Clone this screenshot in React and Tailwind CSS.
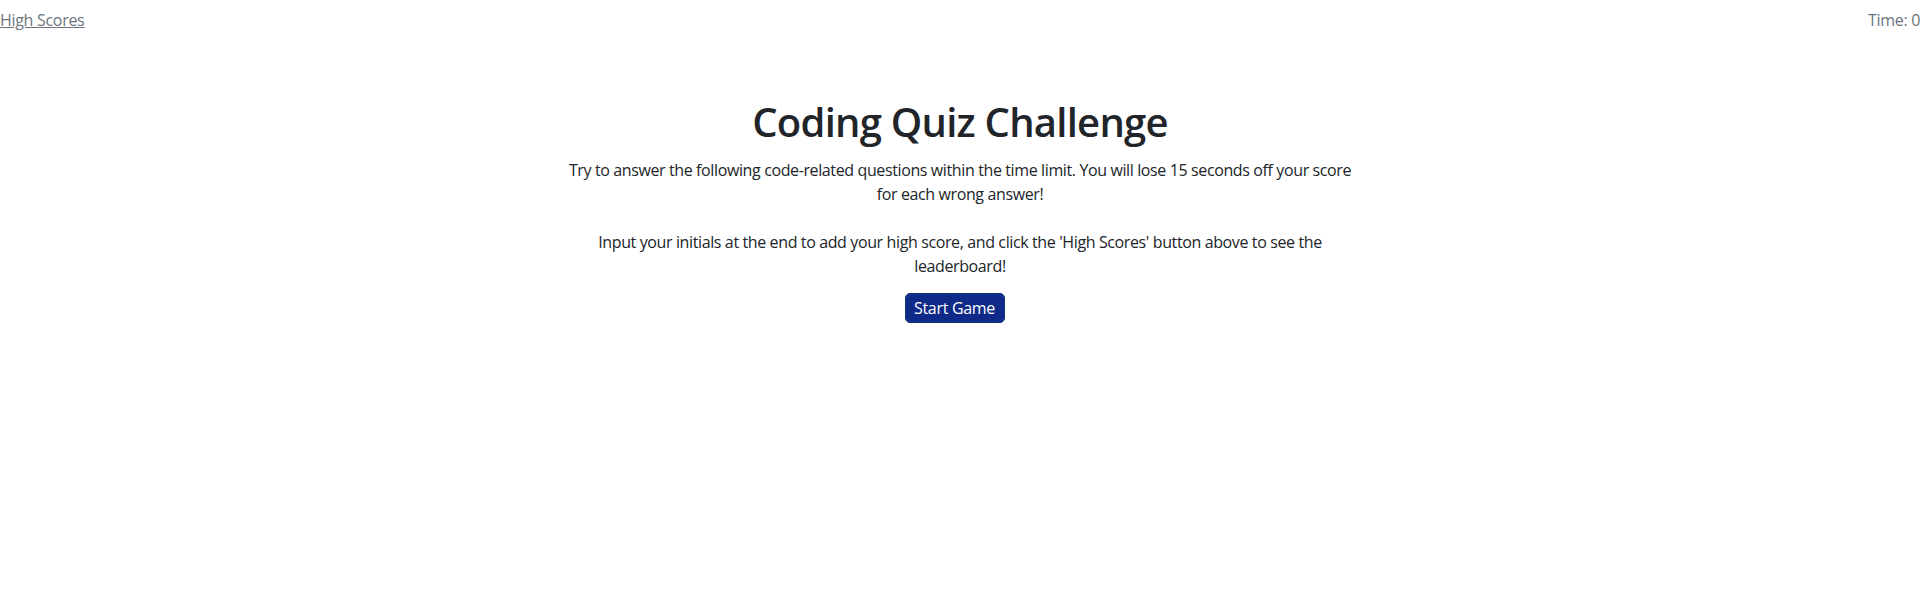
import React from "react";

export default function App() {
  return (
    <div className="min-h-[593px] bg-white font-['Open_Sans',sans-serif] text-[#212529]">
      {/* top bar */}
      <header className="flex items-start justify-between pt-2 text-base leading-6">
        <a href="#" className="tracking-[-0.3px] text-[#6c757d] underline">
          High Scores
        </a>
        <span className="tracking-[-0.3px] text-[#6c757d]">Time: 0</span>
      </header>

      {/* intro card */}
      <main className="mx-auto mt-[66px] flex max-w-[800px] flex-col items-center text-center">
        <h1 className="mb-3 text-[40px] font-semibold leading-[48px] tracking-[-0.75px]">
          Coding Quiz Challenge
        </h1>
        <p className="text-base leading-6 tracking-[-0.38px]">
          Try to answer the following code-related questions within the time
          limit. You will lose 15 seconds off your score for each wrong answer!
        </p>
        <p className="mt-6 text-base leading-6 tracking-[-0.38px]">
          Input your initials at the end to add your high score, and click the
          'High Scores' button above to see the leaderboard!
        </p>
        <button className="mr-[11px] mt-[15px] h-[30px] w-[100px] rounded-[5px] border border-[#0d3a72] bg-[#102a89] text-base tracking-[-0.3px] text-white">
          Start Game
        </button>
      </main>
    </div>
  );
}
